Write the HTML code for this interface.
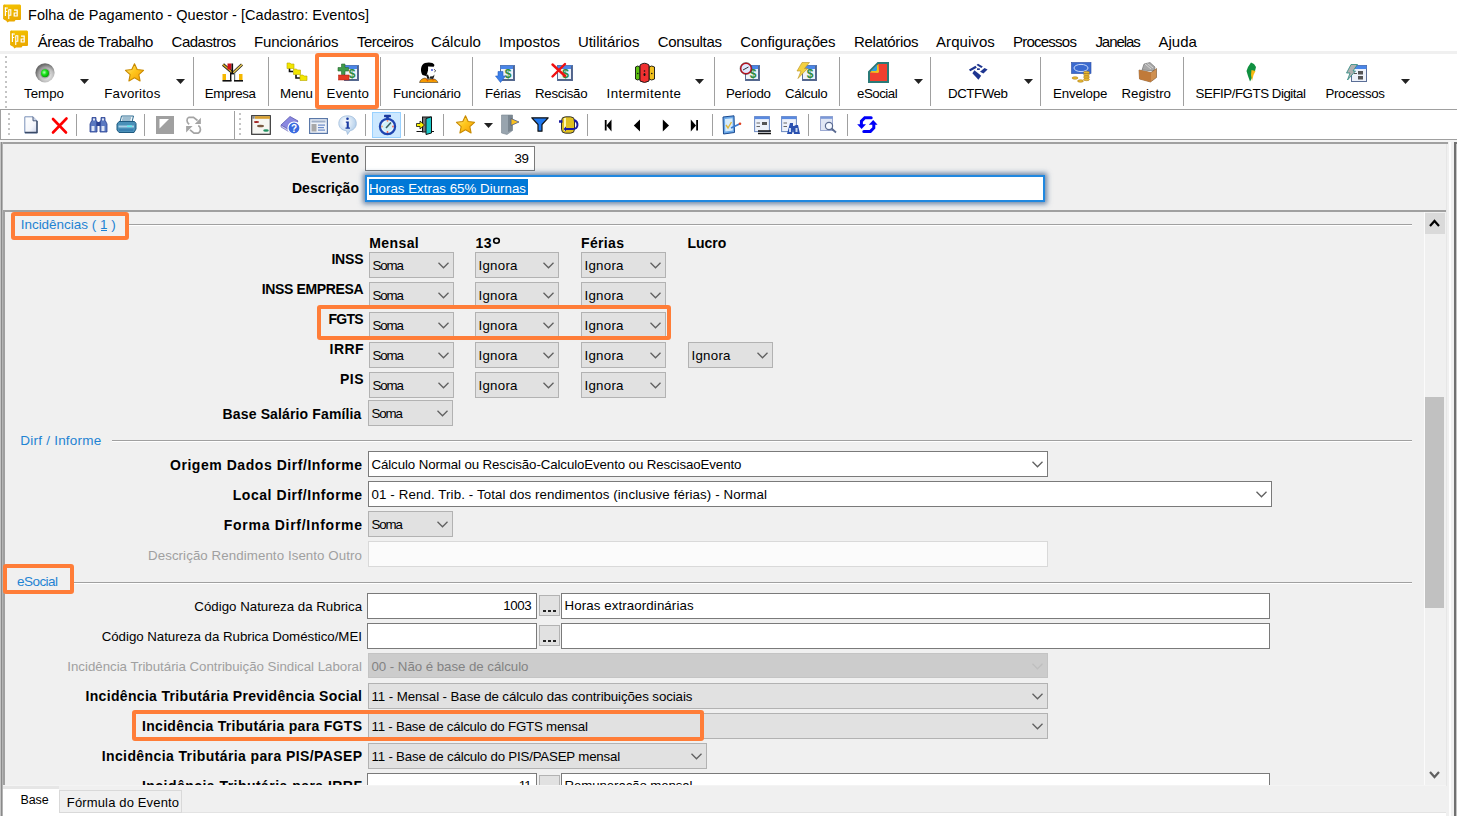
<!DOCTYPE html>
<html><head><meta charset="utf-8"><style>
html,body{margin:0;padding:0;width:1457px;height:816px;overflow:hidden;background:#fff;}
body{position:relative;font-family:"Liberation Sans",sans-serif;color:#000;}
.t{position:absolute;white-space:pre;line-height:1;}
.b{position:absolute;box-sizing:border-box;}
.i{position:absolute;overflow:visible;}
</style></head><body>
<div class="b" style="left:0px;top:0px;width:1457px;height:816px;background:#fff;"></div>
<svg class="i" style="left:3px;top:4px;" width="19" height="19" viewBox="0 0 19 19"><defs><linearGradient id="fpg3" x1="0" y1="0" x2="0.3" y2="1"><stop offset="0" stop-color="#f4c400"/><stop offset="1" stop-color="#eaa800"/></linearGradient></defs><path d="M1 0.5 H17 L18 1.5 V15.5 L17 16 H12.5 L11.5 17.5 H6 L4.5 18.5 L3 16.5 L0.3 15 V1.5 Z" fill="url(#fpg3)"/><path d="M0.3 1.5 L1 0.5 L3 2 V16.5 L0.3 15 Z" fill="#eab000"/><rect x="1.8" y="3.5" width="1.2" height="8.5" fill="#fff"/><rect x="1.8" y="3.5" width="3" height="1.1" fill="#fff"/><rect x="2.6" y="7" width="1.6" height="1" fill="#fff"/><rect x="5.2" y="5.5" width="1.1" height="9.5" fill="#fff"/><path d="M5.8 5.8 H7.8 V11.2 H5.8" fill="none" stroke="#fff" stroke-width="1.1"/><path d="M11 6.2 H14.2 V12 H11.2 V9 H13.6" fill="none" stroke="#fff" stroke-width="1.2"/></svg>
<div class="t" style="left:28.00px;top:8px;font-size:14.5px;letter-spacing:0.034px;">Folha de Pagamento - Questor - [Cadastro: Eventos]</div>
<svg class="i" style="left:10px;top:30px;" width="19" height="19" viewBox="0 0 19 19"><defs><linearGradient id="fpg10" x1="0" y1="0" x2="0.3" y2="1"><stop offset="0" stop-color="#f4c400"/><stop offset="1" stop-color="#eaa800"/></linearGradient></defs><path d="M1 0.5 H17 L18 1.5 V15.5 L17 16 H12.5 L11.5 17.5 H6 L4.5 18.5 L3 16.5 L0.3 15 V1.5 Z" fill="url(#fpg10)"/><path d="M0.3 1.5 L1 0.5 L3 2 V16.5 L0.3 15 Z" fill="#eab000"/><rect x="1.8" y="3.5" width="1.2" height="8.5" fill="#fff"/><rect x="1.8" y="3.5" width="3" height="1.1" fill="#fff"/><rect x="2.6" y="7" width="1.6" height="1" fill="#fff"/><rect x="5.2" y="5.5" width="1.1" height="9.5" fill="#fff"/><path d="M5.8 5.8 H7.8 V11.2 H5.8" fill="none" stroke="#fff" stroke-width="1.1"/><path d="M11 6.2 H14.2 V12 H11.2 V9 H13.6" fill="none" stroke="#fff" stroke-width="1.2"/></svg>
<div class="t" style="left:37.80px;top:34px;font-size:15px;letter-spacing:-0.436px;">Áreas de Trabalho</div>
<div class="t" style="left:171.60px;top:34px;font-size:15px;letter-spacing:-0.496px;">Cadastros</div>
<div class="t" style="left:254.00px;top:34px;font-size:15px;letter-spacing:-0.125px;">Funcionários</div>
<div class="t" style="left:357.00px;top:34px;font-size:15px;letter-spacing:-0.506px;">Terceiros</div>
<div class="t" style="left:431.00px;top:34px;font-size:15px;letter-spacing:-0.038px;">Cálculo</div>
<div class="t" style="left:499.00px;top:34px;font-size:15px;letter-spacing:0.020px;">Impostos</div>
<div class="t" style="left:577.90px;top:34px;font-size:15px;letter-spacing:-0.018px;">Utilitários</div>
<div class="t" style="left:657.70px;top:34px;font-size:15px;letter-spacing:-0.300px;">Consultas</div>
<div class="t" style="left:740.30px;top:34px;font-size:15px;letter-spacing:-0.119px;">Configurações</div>
<div class="t" style="left:854.00px;top:34px;font-size:15px;letter-spacing:-0.348px;">Relatórios</div>
<div class="t" style="left:936.00px;top:34px;font-size:15px;letter-spacing:0.063px;">Arquivos</div>
<div class="t" style="left:1013.00px;top:34px;font-size:15px;letter-spacing:-0.766px;">Processos</div>
<div class="t" style="left:1095.40px;top:34px;font-size:15px;letter-spacing:-1.051px;">Janelas</div>
<div class="t" style="left:1158.60px;top:34px;font-size:15px;letter-spacing:-0.042px;">Ajuda</div>
<div class="b" style="left:0px;top:51px;width:1457px;height:3px;background:#f0f0f0;"></div>
<div class="b" style="left:0px;top:54px;width:1457px;height:55px;background:#fff;"></div>
<div class="b" style="left:0px;top:109px;width:1457px;height:1px;background:#a0a0a0;"></div>
<div class="b" style="left:5px;top:56px;width:2px;height:2px;background:#c4c4c4;"></div>
<div class="b" style="left:5px;top:61px;width:2px;height:2px;background:#c4c4c4;"></div>
<div class="b" style="left:5px;top:66px;width:2px;height:2px;background:#c4c4c4;"></div>
<div class="b" style="left:5px;top:71px;width:2px;height:2px;background:#c4c4c4;"></div>
<div class="b" style="left:5px;top:76px;width:2px;height:2px;background:#c4c4c4;"></div>
<div class="b" style="left:5px;top:81px;width:2px;height:2px;background:#c4c4c4;"></div>
<div class="b" style="left:5px;top:86px;width:2px;height:2px;background:#c4c4c4;"></div>
<div class="b" style="left:5px;top:91px;width:2px;height:2px;background:#c4c4c4;"></div>
<div class="b" style="left:5px;top:96px;width:2px;height:2px;background:#c4c4c4;"></div>
<div class="b" style="left:5px;top:101px;width:2px;height:2px;background:#c4c4c4;"></div>
<div class="b" style="left:5px;top:106px;width:2px;height:2px;background:#c4c4c4;"></div>
<div class="t" style="left:24.00px;top:87px;font-size:13.3px;letter-spacing:0.020px;">Tempo</div>
<div class="t" style="left:104.30px;top:87px;font-size:13.3px;letter-spacing:0.163px;">Favoritos</div>
<div class="t" style="left:204.70px;top:87px;font-size:13.3px;letter-spacing:-0.320px;">Empresa</div>
<div class="t" style="left:280.00px;top:87px;font-size:13.3px;letter-spacing:-0.090px;">Menu</div>
<div class="t" style="left:326.60px;top:87px;font-size:13.3px;letter-spacing:0.198px;">Evento</div>
<div class="t" style="left:393.00px;top:87px;font-size:13.3px;letter-spacing:-0.150px;">Funcionário</div>
<div class="t" style="left:485.00px;top:87px;font-size:13.3px;letter-spacing:-0.191px;">Férias</div>
<div class="t" style="left:535.00px;top:87px;font-size:13.3px;letter-spacing:-0.300px;">Rescisão</div>
<div class="t" style="left:606.60px;top:87px;font-size:13.3px;letter-spacing:0.379px;">Intermitente</div>
<div class="t" style="left:726.00px;top:87px;font-size:13.3px;letter-spacing:-0.264px;">Período</div>
<div class="t" style="left:785.00px;top:87px;font-size:13.3px;letter-spacing:-0.293px;">Cálculo</div>
<div class="t" style="left:857.00px;top:87px;font-size:13.3px;letter-spacing:-0.504px;">eSocial</div>
<div class="t" style="left:948.00px;top:87px;font-size:13.3px;letter-spacing:-0.428px;">DCTFWeb</div>
<div class="t" style="left:1053.00px;top:87px;font-size:13.3px;letter-spacing:-0.137px;">Envelope</div>
<div class="t" style="left:1121.50px;top:87px;font-size:13.3px;">Registro</div>
<div class="t" style="left:1195.60px;top:87px;font-size:13.3px;letter-spacing:-0.462px;">SEFIP/FGTS Digital</div>
<div class="t" style="left:1325.40px;top:87px;font-size:13.3px;letter-spacing:-0.312px;">Processos</div>
<div class="b" style="left:193px;top:57px;width:1px;height:49px;background:#a0a0a0;"></div>
<div class="b" style="left:268px;top:57px;width:1px;height:49px;background:#a0a0a0;"></div>
<div class="b" style="left:380px;top:57px;width:1px;height:49px;background:#a0a0a0;"></div>
<div class="b" style="left:472px;top:57px;width:1px;height:49px;background:#a0a0a0;"></div>
<div class="b" style="left:714px;top:57px;width:1px;height:49px;background:#a0a0a0;"></div>
<div class="b" style="left:839px;top:57px;width:1px;height:49px;background:#a0a0a0;"></div>
<div class="b" style="left:930px;top:57px;width:1px;height:49px;background:#a0a0a0;"></div>
<div class="b" style="left:1040px;top:57px;width:1px;height:49px;background:#a0a0a0;"></div>
<div class="b" style="left:1183px;top:57px;width:1px;height:49px;background:#a0a0a0;"></div>
<svg class="i" style="left:80px;top:79px;" width="9" height="5" viewBox="0 0 9 5"><path d="M0 0 L9 0 L4.5 5 Z" fill="#222"/></svg>
<svg class="i" style="left:176px;top:79px;" width="9" height="5" viewBox="0 0 9 5"><path d="M0 0 L9 0 L4.5 5 Z" fill="#222"/></svg>
<svg class="i" style="left:695px;top:79px;" width="9" height="5" viewBox="0 0 9 5"><path d="M0 0 L9 0 L4.5 5 Z" fill="#222"/></svg>
<svg class="i" style="left:914px;top:79px;" width="9" height="5" viewBox="0 0 9 5"><path d="M0 0 L9 0 L4.5 5 Z" fill="#222"/></svg>
<svg class="i" style="left:1024px;top:79px;" width="9" height="5" viewBox="0 0 9 5"><path d="M0 0 L9 0 L4.5 5 Z" fill="#222"/></svg>
<svg class="i" style="left:1401px;top:79px;" width="9" height="5" viewBox="0 0 9 5"><path d="M0 0 L9 0 L4.5 5 Z" fill="#222"/></svg>
<svg class="i" style="left:35px;top:63px;" width="20" height="20" viewBox="0 0 20 20"><defs><radialGradient id="gr1" cx="0.6" cy="0.65" r="0.6"><stop offset="0" stop-color="#f4f4f4"/><stop offset="0.6" stop-color="#bdbdbd"/><stop offset="1" stop-color="#6d6d6d"/></radialGradient><radialGradient id="gg1" cx="0.4" cy="0.4" r="0.6"><stop offset="0" stop-color="#b9ffb9"/><stop offset="0.5" stop-color="#19e619"/><stop offset="1" stop-color="#0aa00a"/></radialGradient></defs><circle cx="10" cy="9.8" r="9.6" fill="url(#gr1)"/><circle cx="10" cy="10.3" r="5.2" fill="#8a8a8a" opacity="0.6"/><circle cx="10" cy="10.2" r="4" fill="url(#gg1)"/></svg>
<svg class="i" style="left:125px;top:62.5px;" width="19" height="19" viewBox="0 0 19 19"><defs><linearGradient id="st1" x1="0" y1="0" x2="1" y2="1"><stop offset="0" stop-color="#fff2a0"/><stop offset="0.45" stop-color="#ffc81e"/><stop offset="1" stop-color="#f59a00"/></linearGradient></defs><polygon points="9.50,0.76 12.18,6.57 18.54,7.32 13.84,11.67 15.08,17.95 9.50,14.82 3.92,17.95 5.16,11.67 0.46,7.32 6.82,6.57" fill="url(#st1)" stroke="#c98a00" stroke-width="1.1" stroke-linejoin="round"/></svg>
<svg class="i" style="left:222px;top:63px;" width="21" height="19" viewBox="0 0 21 19"><path d="M1 1.5 L11 10" stroke="#1a1a1a" stroke-width="3"/><path d="M1 1.5 L11 10" stroke="#e0b020" stroke-width="1.6"/><path d="M20 1.5 L11 10" stroke="#1a1a1a" stroke-width="3"/><path d="M20 1.5 L11 10" stroke="#e8c850" stroke-width="1.6"/><rect x="5.5" y="0.5" width="4" height="6" fill="#d0101a"/><rect x="9.5" y="0.5" width="1.6" height="10" fill="#111"/><rect x="8" y="10" width="5" height="1.4" fill="#111"/><rect x="8" y="10" width="1.4" height="8" fill="#111"/><rect x="12" y="10" width="1.2" height="8" fill="#6a7a7a"/><rect x="0.5" y="11" width="3.5" height="6.5" fill="#f5b800"/><rect x="17" y="11" width="3.5" height="6.5" fill="#f5b800"/><rect x="0.5" y="17" width="9" height="1.6" fill="#111"/><rect x="12" y="17" width="9" height="1.6" fill="#111"/></svg>
<svg class="i" style="left:286px;top:62px;" width="22" height="20" viewBox="0 0 22 20"><path d="M3.5 6 V9.5 H7" stroke="#111" stroke-width="1.6" fill="none"/><path d="M10 12.5 V16 H14" stroke="#111" stroke-width="1.6" fill="none"/><path d="M1 1 H4 L5 2 H8 V6.5 H1 Z" fill="#f2e600" stroke="#b8a800" stroke-width="0.6"/><path d="M7.5 7 H10.5 L11.5 8 H14.5 V12.5 H7.5 Z" fill="#f2e600" stroke="#b8a800" stroke-width="0.6"/><path d="M14 13 H17 L18 14 H21 V18.5 H14 Z" fill="#f2e600" stroke="#b8a800" stroke-width="0.6"/></svg>
<svg class="i" style="left:344px;top:65px;" width="15" height="16" viewBox="0 0 15 16"><rect x="0.5" y="0.5" width="14" height="15" fill="#eef2fa" stroke="#5a6e96" stroke-width="1"/><rect x="0.5" y="0.5" width="14" height="3.5" fill="#4a86e8"/><rect x="13" y="1" width="1.5" height="14.5" fill="#52648a"/><rect x="1" y="14" width="13.5" height="1.5" fill="#52648a"/><text x="8.0" y="13" text-anchor="middle" font-family="Liberation Sans" font-weight="bold" font-size="12" fill="#2e8b3e">$</text></svg>
<svg class="i" style="left:338px;top:63px;" width="12" height="18" viewBox="0 0 12 18"><path d="M3.5 1 H7 V4.5 H10.5 V8 H7 V11.5 H3.5 V8 H0 V4.5 H3.5 Z" fill="#3f9a4a" stroke="#2a6a30" stroke-width="0.6"/><rect x="0.5" y="12" width="10.5" height="5" fill="#e33a22" stroke="#b02010" stroke-width="0.5"/></svg>
<svg class="i" style="left:419px;top:62px;" width="20" height="21" viewBox="0 0 20 21"><path d="M3.5 13 C1 9.5 1.5 2.5 6 1 C9.5 0 14.5 0.3 15.5 3 L14.5 5 L9.5 6.5 L8.5 11 L7 14 Z" fill="#000"/><path d="M9 4.5 L14.5 4.8 L15.5 7.5 L17 9 L15.2 10 L15.5 12.5 L13.5 14 L10.5 14.5 L8.5 12 L9.2 7 Z" fill="#fff"/><path d="M15.5 12.5 L13.8 14.2 L11 14.5 L10.5 16.5 L14 17 L15 15 Z" fill="#222"/><path d="M7 13 L9 12.5 L10.5 16.5 L8.5 17 Z" fill="#111"/><circle cx="13" cy="8" r="0.9" fill="#3040e0"/><path d="M15 7 L16.8 9 L15.2 10" stroke="#222" stroke-width="0.7" fill="none"/><path d="M0.5 20.5 C1 18 3 16.5 6 16 L9 17.5 L12 17 L15 17 C17 17.5 18.5 19 19 20.5 Z" fill="#f59a00" stroke="#222" stroke-width="0.5"/><path d="M6 16 L9.5 18.5 L8.5 19.5 Z M13 17 L15 17.2 L14 19 Z" fill="#e05000"/></svg>
<svg class="i" style="left:500px;top:65px;" width="15" height="16" viewBox="0 0 15 16"><rect x="0.5" y="0.5" width="14" height="15" fill="#eef2fa" stroke="#5a6e96" stroke-width="1"/><rect x="0.5" y="0.5" width="14" height="3.5" fill="#4a86e8"/><rect x="13" y="1" width="1.5" height="14.5" fill="#52648a"/><rect x="1" y="14" width="13.5" height="1.5" fill="#52648a"/><text x="8.0" y="13" text-anchor="middle" font-family="Liberation Sans" font-weight="bold" font-size="12" fill="#2e8b3e">$</text></svg>
<svg class="i" style="left:495px;top:71px;" width="11" height="12" viewBox="0 0 11 12"><path d="M3 0.5 H8 V5 H10.5 L5.5 11.5 L0.5 5 H3 Z" fill="#3a7ee8" stroke="#2a5fc0" stroke-width="0.6"/></svg>
<svg class="i" style="left:557px;top:65px;" width="16" height="16" viewBox="0 0 16 16"><rect x="0.5" y="0.5" width="15" height="15" fill="#eef2fa" stroke="#5a6e96" stroke-width="1"/><rect x="0.5" y="0.5" width="15" height="3.5" fill="#4a86e8"/><rect x="14" y="1" width="1.5" height="14.5" fill="#52648a"/><rect x="1" y="14" width="14.5" height="1.5" fill="#52648a"/><text x="8.5" y="13" text-anchor="middle" font-family="Liberation Sans" font-weight="bold" font-size="12" fill="#2e8b3e">$</text></svg>
<svg class="i" style="left:551px;top:63px;" width="16" height="15" viewBox="0 0 16 15"><path d="M1.5 1.5 L14 13 M14 1 L1.5 13.5" stroke="#f01010" stroke-width="2.4" stroke-linecap="round"/></svg>
<svg class="i" style="left:634px;top:62px;" width="22" height="21" viewBox="0 0 22 21"><path d="M1.5 5 Q3.5 3 6 5 V17 Q3.5 19 1.5 17 Z" fill="#5cc010" stroke="#111" stroke-width="0.9"/><path d="M15 5 Q17.5 3 20.5 5 V17 Q17.5 19 15 17 Z" fill="#f0c020" stroke="#111" stroke-width="0.9"/><path d="M6 3 Q10.5 -0.5 15 3 V19 Q10.5 22 6 19 Z" fill="#f03030" stroke="#111" stroke-width="0.9"/><circle cx="10.5" cy="9" r="0.8" fill="#111"/><ellipse cx="10.5" cy="12.5" rx="1" ry="1.6" fill="#111"/><circle cx="3.8" cy="11.5" r="0.8" fill="#111"/><circle cx="17.8" cy="11.5" r="0.8" fill="#111"/></svg>
<svg class="i" style="left:745px;top:65px;" width="15" height="16" viewBox="0 0 15 16"><rect x="0.5" y="0.5" width="14" height="15" fill="#eef2fa" stroke="#5a6e96" stroke-width="1"/><rect x="0.5" y="0.5" width="14" height="3.5" fill="#4a86e8"/><rect x="13" y="1" width="1.5" height="14.5" fill="#52648a"/><rect x="1" y="14" width="13.5" height="1.5" fill="#52648a"/><text x="8.0" y="13" text-anchor="middle" font-family="Liberation Sans" font-weight="bold" font-size="12" fill="#2e8b3e">$</text></svg>
<svg class="i" style="left:740px;top:62px;" width="13" height="13" viewBox="0 0 13 13"><circle cx="6" cy="6.5" r="5.3" fill="#dfe8ff" stroke="#c01020" stroke-width="1.5"/><circle cx="6" cy="6.5" r="6" fill="none" stroke="#222" stroke-width="0.4"/><path d="M3 8 L8.5 5" stroke="#333" stroke-width="1"/></svg>
<svg class="i" style="left:802px;top:65px;" width="15" height="16" viewBox="0 0 15 16"><rect x="0.5" y="0.5" width="14" height="15" fill="#eef2fa" stroke="#5a6e96" stroke-width="1"/><rect x="0.5" y="0.5" width="14" height="3.5" fill="#4a86e8"/><rect x="13" y="1" width="1.5" height="14.5" fill="#52648a"/><rect x="1" y="14" width="13.5" height="1.5" fill="#52648a"/><text x="8.0" y="13" text-anchor="middle" font-family="Liberation Sans" font-weight="bold" font-size="12" fill="#2e8b3e">$</text></svg>
<svg class="i" style="left:796px;top:62px;" width="14" height="17" viewBox="0 0 14 17"><path d="M6 0.5 H13.5 L8.5 6.5 H11.5 L2 16.5 L5 9 H1 Z" fill="#f2d040" stroke="#b89020" stroke-width="0.6"/></svg>
<svg class="i" style="left:868px;top:62px;" width="21" height="21" viewBox="0 0 21 21"><path d="M10 1 H20 V20 H1 V10 Z" fill="#f04030" stroke="#2a7a78" stroke-width="2" stroke-linejoin="miter"/><path d="M2 10.5 L10.5 2 L11 10 L10 11 Z" fill="#f0c020"/><path d="M3 9 L9 3 L9 8 L8 9 Z" fill="#30a0e0"/></svg>
<svg class="i" style="left:965px;top:60px;" width="26" height="24" viewBox="0 0 26 24"><path d="M4 9.5 L10.5 5.8 L11.8 7.8 L5.2 11.2 Z" fill="#1e3590"/><path d="M11.5 5 L13 3.8 L17.8 6.6 L16.3 8 Z" fill="#1e3590"/><path d="M12 8.3 H14.8 V10 H12 Z" fill="#1e3590"/><path d="M15 11.8 L19.5 8 L22.6 9.6 L18.4 13.6 Z" fill="#1e3590"/><path d="M7.4 13.3 L9.4 10.2 L16.2 15.8 L13.4 19.8 Z" fill="#1e3590"/></svg>
<svg class="i" style="left:1071px;top:62px;" width="21" height="21" viewBox="0 0 21 21"><rect x="0.5" y="0.5" width="19.5" height="11" fill="#3a6ad0" stroke="#2a4aa0" stroke-width="0.6"/><ellipse cx="10" cy="6" rx="7" ry="3.6" fill="none" stroke="#c8d8f8" stroke-width="1"/><ellipse cx="15.5" cy="10.5" rx="3" ry="1.3" fill="#e8b830" stroke="#a07010" stroke-width="0.5"/><ellipse cx="15.5" cy="12.8" rx="3" ry="1.3" fill="#e8b830" stroke="#a07010" stroke-width="0.5"/><ellipse cx="15.5" cy="15.1" rx="3" ry="1.3" fill="#e8b830" stroke="#a07010" stroke-width="0.5"/><ellipse cx="15.5" cy="17.4" rx="3" ry="1.3" fill="#e8b830" stroke="#a07010" stroke-width="0.5"/><ellipse cx="4" cy="16" rx="3" ry="1.3" fill="#e8b830" stroke="#a07010" stroke-width="0.5"/><ellipse cx="9.5" cy="19" rx="3" ry="1.3" fill="#e8b830" stroke="#a07010" stroke-width="0.5"/></svg>
<svg class="i" style="left:1138px;top:62px;" width="20" height="21" viewBox="0 0 20 21"><path d="M4 8 L6 2 L12 0.5 L17 5 L16 9 Z" fill="#a8a8a8" stroke="#6a6a6a" stroke-width="0.6"/><path d="M7 2 L13 7 M9.5 1.5 L15 6" stroke="#e0e0e0" stroke-width="0.8"/><path d="M1 8 L13 10.5 L18.5 6.5 V15.5 L12.5 20 L1.5 17 Z" fill="#d09050" stroke="#7a5028" stroke-width="0.6"/><path d="M1 8 L13 10.5 V20 L1.5 17 Z" fill="#c07a3a"/></svg>
<svg class="i" style="left:1246px;top:62px;" width="11" height="20" viewBox="0 0 11 20"><path d="M5 0.5 L8 2 L10 5 L9 9 L7 11 L6 16 L4 19.5 L2 14 L0.5 9 L2 5 Z" fill="#109040"/><path d="M5.5 8 L9.5 9 L7.5 13 L6 19 L5 13 Z" fill="#f8b810"/></svg>
<svg class="i" style="left:1346px;top:64px;" width="21" height="18" viewBox="0 0 21 18"><rect x="5.5" y="1.5" width="15" height="16" fill="#eef2fa" stroke="#5a6e96" stroke-width="1"/><rect x="5.5" y="1.5" width="15" height="3.5" fill="#4a86e8"/><rect x="12" y="7" width="5" height="3.5" fill="#555" /><rect x="12" y="12" width="5" height="3.5" fill="#555"/><rect x="8" y="9" width="3" height="1" fill="#555"/><path d="M5 0.5 H11.5 L7 7 H9.5 L1.5 16 L4 9 H0.5 Z" fill="#b0b0b0" stroke="#2a8a80" stroke-width="0.8"/></svg>
<div class="b" style="left:0px;top:110px;width:1457px;height:29px;background:#fff;"></div>
<div class="b" style="left:0px;top:139px;width:1457px;height:1px;background:#a0a0a0;"></div>
<div class="b" style="left:0px;top:109px;width:1px;height:31px;background:#a0a0a0;"></div>
<div class="b" style="left:8px;top:113px;width:2px;height:2px;background:#c4c4c4;"></div>
<div class="b" style="left:8px;top:118px;width:2px;height:2px;background:#c4c4c4;"></div>
<div class="b" style="left:8px;top:123px;width:2px;height:2px;background:#c4c4c4;"></div>
<div class="b" style="left:8px;top:128px;width:2px;height:2px;background:#c4c4c4;"></div>
<div class="b" style="left:8px;top:133px;width:2px;height:2px;background:#c4c4c4;"></div>
<div class="b" style="left:234px;top:111px;width:1px;height:28px;background:#a0a0a0;"></div>
<div class="b" style="left:239px;top:113px;width:2px;height:2px;background:#c4c4c4;"></div>
<div class="b" style="left:239px;top:118px;width:2px;height:2px;background:#c4c4c4;"></div>
<div class="b" style="left:239px;top:123px;width:2px;height:2px;background:#c4c4c4;"></div>
<div class="b" style="left:239px;top:128px;width:2px;height:2px;background:#c4c4c4;"></div>
<div class="b" style="left:239px;top:133px;width:2px;height:2px;background:#c4c4c4;"></div>
<div class="b" style="left:76px;top:114px;width:1px;height:22px;background:#a0a0a0;"></div>
<div class="b" style="left:144px;top:114px;width:1px;height:22px;background:#a0a0a0;"></div>
<div class="b" style="left:365px;top:114px;width:1px;height:22px;background:#a0a0a0;"></div>
<div class="b" style="left:404px;top:114px;width:1px;height:22px;background:#a0a0a0;"></div>
<div class="b" style="left:443px;top:114px;width:1px;height:22px;background:#a0a0a0;"></div>
<div class="b" style="left:587px;top:114px;width:1px;height:22px;background:#a0a0a0;"></div>
<div class="b" style="left:712px;top:114px;width:1px;height:22px;background:#a0a0a0;"></div>
<div class="b" style="left:808px;top:114px;width:1px;height:22px;background:#a0a0a0;"></div>
<div class="b" style="left:847px;top:114px;width:1px;height:22px;background:#a0a0a0;"></div>
<div class="b" style="left:372px;top:112px;width:29px;height:26px;background:#cce8ff;border:1px solid #99d1ff;"></div>
<svg class="i" style="left:24px;top:116px;" width="14" height="18" viewBox="0 0 14 18"><defs><linearGradient id="dg" x1="0" y1="0" x2="1" y2="1"><stop offset="0" stop-color="#fff"/><stop offset="0.6" stop-color="#f4f6fb"/><stop offset="1" stop-color="#c8d0e8"/></linearGradient></defs><path d="M0.8 0.8 H9 L13 4.8 V17 H0.8 Z" fill="url(#dg)" stroke="#7a90b8" stroke-width="1"/><path d="M9 0.8 V4.8 H13" fill="#cdd6ea" stroke="#4a5a7a" stroke-width="1"/><path d="M1 16.5 H13 V5" fill="none" stroke="#3a4a66" stroke-width="1.4"/></svg>
<svg class="i" style="left:51px;top:117px;" width="17" height="17" viewBox="0 0 17 17"><path d="M2 2 L15 15.5 M15.5 1.5 L2 15.5" stroke="#ff0000" stroke-width="2.6" stroke-linecap="round"/></svg>
<svg class="i" style="left:89px;top:116px;" width="19" height="17" viewBox="0 0 19 17"><path d="M3 1.5 H7 V5 H8 V16 H1 V8 L2.5 5 H3 Z" fill="#5a78c0" stroke="#2a4090" stroke-width="0.8"/><path d="M12 1.5 H16 V5 H16.5 L18 8 V16 H11 V5 H12 Z" fill="#5a78c0" stroke="#2a4090" stroke-width="0.8"/><rect x="7.5" y="6" width="4" height="4" fill="#2a4090"/><rect x="2.5" y="10" width="3" height="5" fill="#dfe6f5"/><rect x="12.5" y="10" width="3" height="5" fill="#dfe6f5"/><rect x="4" y="2.5" width="2" height="2" fill="#dfe6f5"/><rect x="13" y="2.5" width="2" height="2" fill="#dfe6f5"/></svg>
<svg class="i" style="left:116px;top:115px;" width="21" height="19" viewBox="0 0 21 19"><path d="M5.5 1 H17.5 L16 7 H4 Z" fill="#eef4f8" stroke="#2a6a90" stroke-width="1"/><path d="M6.5 3 H15 M6 5 H14.5" stroke="#3a7aa0" stroke-width="0.9"/><path d="M1 9 L3 6.5 H18.5 L20 8.5 V14 L18 17.5 H3 L1 15 Z" fill="#4a90b8" stroke="#1f5a80" stroke-width="1"/><rect x="2.5" y="10.5" width="15.5" height="2" fill="#a8d0e8"/><rect x="11" y="10.5" width="5" height="1.5" fill="#60f0f0"/><rect x="3" y="14" width="14" height="2" fill="#3a80b0"/></svg>
<svg class="i" style="left:156px;top:116px;" width="18" height="18" viewBox="0 0 18 18"><rect x="0" y="0" width="18" height="18" fill="#a0a0a0"/><path d="M3.5 3 H13 L3.5 12.5 Z" fill="#fff"/></svg>
<svg class="i" style="left:182px;top:113px;" width="24" height="24" viewBox="0 0 24 24"><path d="M7.2 11.2 C4.3 9.5 4.3 5.3 7 4.3 H11.5 L15.5 7.5" stroke="#a4a4a4" stroke-width="1.7" fill="none"/><path d="M12.8 10.9 H18.9 V4.8 Z" fill="#a4a4a4"/><path d="M16.3 12.6 C19.2 14.3 19.2 19 16 20.2 H12 L8 16.8" stroke="#a4a4a4" stroke-width="1.7" fill="none"/><path d="M4.1 13 H10.6 L4.1 19.6 Z" fill="#a4a4a4"/></svg>
<svg class="i" style="left:251px;top:115px;" width="20" height="20" viewBox="0 0 20 20"><rect x="0.7" y="0.7" width="18.6" height="18.6" fill="#f6f6f2" stroke="#333" stroke-width="1.2"/><rect x="4" y="1.2" width="15" height="2.6" fill="#d8a030"/><rect x="1.2" y="1.2" width="2.5" height="2.5" fill="#888"/><ellipse cx="5.5" cy="7" rx="2.6" ry="1.1" fill="#a02020"/><ellipse cx="9.5" cy="11" rx="3.5" ry="1.3" fill="#7a5a40"/><ellipse cx="15" cy="15.5" rx="2.8" ry="1.2" fill="#209060"/></svg>
<svg class="i" style="left:280px;top:115px;" width="21" height="20" viewBox="0 0 21 20"><path d="M1 10 L10 1.5 L18 6 L11 16 Z" fill="#8a88e0" stroke="#5a58b0" stroke-width="0.8"/><path d="M1 10 L11 16 L11 18 L1 12 Z" fill="#c8c8f0" stroke="#5a58b0" stroke-width="0.6"/><circle cx="14" cy="13" r="6" fill="#3a6ae0" stroke="#fff" stroke-width="1.2"/><text x="14" y="17" text-anchor="middle" font-family="Liberation Sans" font-weight="bold" font-size="10" fill="#fff">?</text></svg>
<svg class="i" style="left:309px;top:118px;" width="19" height="16" viewBox="0 0 19 16"><rect x="0.6" y="0.6" width="17.8" height="14.8" fill="#eef2f8" stroke="#5a78a8" stroke-width="1.2"/><rect x="2.5" y="2.5" width="14" height="2" fill="#a0b0c8"/><rect x="2.5" y="6" width="5" height="7.5" fill="#a8a8a8"/><rect x="9" y="6.5" width="7" height="1.2" fill="#6a8ac8"/><rect x="9" y="9" width="6" height="1.2" fill="#6a8ac8"/><rect x="9" y="11.5" width="7" height="1.2" fill="#6a8ac8"/></svg>
<svg class="i" style="left:338px;top:115px;" width="19" height="20" viewBox="0 0 19 20"><defs><radialGradient id="ib" cx="0.4" cy="0.35" r="0.7"><stop offset="0" stop-color="#ffffff"/><stop offset="1" stop-color="#a8c8e8"/></radialGradient></defs><path d="M9.5 0.8 C15 0.8 18.3 4 18.3 8.5 C18.3 12.5 15.5 15 12 15.8 L9.5 19.5 L8.5 15.8 C4 15.3 0.8 12.5 0.8 8.5 C0.8 4 4 0.8 9.5 0.8 Z" fill="url(#ib)" stroke="#9ab8d8" stroke-width="0.7"/><circle cx="9.5" cy="3.8" r="1.3" fill="#1a3aa0"/><path d="M7.8 6.5 H10.8 V12.5 H12 V13.8 H7.5 V12.5 H8.7 V7.8 H7.8 Z" fill="#1a3aa0"/></svg>
<svg class="i" style="left:378px;top:114px;" width="19" height="21" viewBox="0 0 19 21"><rect x="6" y="0.8" width="7" height="2.5" rx="0.8" fill="#1a3aa0"/><rect x="8.2" y="3" width="2.6" height="2" fill="#1a3aa0"/><circle cx="9.5" cy="12.5" r="7.6" fill="#e8f6ff" stroke="#1e44b0" stroke-width="2.2"/><circle cx="9.5" cy="12.5" r="5" fill="#d0f0f8"/><circle cx="9.5" cy="6.8" r="0.9" fill="#f08060"/><circle cx="15" cy="12.5" r="0.9" fill="#f06050"/><circle cx="9.5" cy="18" r="0.9" fill="#f06050"/><circle cx="4" cy="12.5" r="0.9" fill="#f0a070"/><path d="M8 14 L13 8.5" stroke="#3a6060" stroke-width="1.6"/></svg>
<svg class="i" style="left:416px;top:116px;" width="19" height="19" viewBox="0 0 19 19"><rect x="6.5" y="1" width="8" height="15" fill="#777" stroke="#111" stroke-width="1"/><path d="M10 2.5 L15.5 0.8 V17 L10 18.5 Z" fill="#18c8c8" stroke="#111" stroke-width="1"/><path d="M0.5 7.5 H4 V5 L8.5 9 L4 13 V10.5 H0.5 Z" fill="#f8f000" stroke="#111" stroke-width="0.8"/><path d="M0.5 15.5 H6.5 V13.5" stroke="#111" stroke-width="1" fill="none"/><path d="M15 15.5 H18" stroke="#111" stroke-width="1"/></svg>
<svg class="i" style="left:456px;top:115px;" width="19" height="19" viewBox="0 0 19 19"><defs><linearGradient id="st2" x1="0" y1="0" x2="1" y2="1"><stop offset="0" stop-color="#fff2a0"/><stop offset="0.45" stop-color="#ffc81e"/><stop offset="1" stop-color="#f59a00"/></linearGradient></defs><polygon points="9.50,0.76 12.18,6.57 18.54,7.32 13.84,11.67 15.08,17.95 9.50,14.82 3.92,17.95 5.16,11.67 0.46,7.32 6.82,6.57" fill="url(#st2)" stroke="#c98a00" stroke-width="1.1" stroke-linejoin="round"/></svg>
<svg class="i" style="left:484px;top:123px;" width="9" height="5" viewBox="0 0 9 5"><path d="M0 0 L9 0 L4.5 5 Z" fill="#222"/></svg>
<svg class="i" style="left:500px;top:114px;" width="21" height="21" viewBox="0 0 21 21"><path d="M1.5 1 H12.5 V16.5 L7 20.5 L1.5 19 Z" fill="#98a4ae" stroke="#7a8690" stroke-width="0.6"/><path d="M8 1 H12.5 V16.5 L8 18 Z" fill="#7a8690"/><path d="M11 4.5 L19 8 L11 11.5 Z" fill="#f8c020" stroke="#4a5a8a" stroke-width="0.8"/></svg>
<svg class="i" style="left:531px;top:117px;" width="18" height="15" viewBox="0 0 18 15"><path d="M0.8 0.8 H17.2 L11 7.5 V14.2 H7 V7.5 Z" fill="#1e78f0" stroke="#111" stroke-width="1.2" stroke-linejoin="round"/></svg>
<svg class="i" style="left:559px;top:116px;" width="20" height="18" viewBox="0 0 20 18"><rect x="2.5" y="0.8" width="13" height="16.4" rx="4" fill="#e0c020" stroke="#333" stroke-width="1"/><rect x="5" y="2" width="2" height="13" fill="#fff8b0"/><path d="M0 5.5 H3.5" stroke="#1a1aa0" stroke-width="2.5"/><path d="M15 4 C20 6 19.5 13 14 13 H7" stroke="#1a1aa0" stroke-width="2" fill="none"/><path d="M7 10.5 L4.5 13 L7 15.5 Z" fill="#1a1aa0"/></svg>
<svg class="i" style="left:604px;top:119px;" width="8" height="13" viewBox="0 0 8 13"><rect x="0.8" y="1" width="1.8" height="10.5" fill="#000"/><path d="M7.5 0.5 V12.5 L2.5 6.5 Z" fill="#000"/></svg>
<svg class="i" style="left:633px;top:119px;" width="8" height="13" viewBox="0 0 8 13"><path d="M7 0.5 V12.5 L0.8 6.5 Z" fill="#000"/></svg>
<svg class="i" style="left:662px;top:119px;" width="8" height="13" viewBox="0 0 8 13"><path d="M0.8 0.5 V12.5 L7 6.5 Z" fill="#000"/></svg>
<svg class="i" style="left:690px;top:119px;" width="9" height="13" viewBox="0 0 9 13"><rect x="6.2" y="1" width="1.8" height="10.5" fill="#000"/><path d="M0.8 0.5 V12.5 L6 6.5 Z" fill="#000"/></svg>
<svg class="i" style="left:722px;top:115px;" width="20" height="20" viewBox="0 0 20 20"><path d="M1 2 L12 0.8 L12.5 17.5 L1.5 19 Z" fill="#6aa8e8" stroke="#1a4a90" stroke-width="1"/><path d="M3 4 L10.5 3.2 L10.8 15.5 L3.3 16.5 Z" fill="#d8ecfb"/><path d="M4 10 L6 13 L9.5 7" stroke="#e0b840" stroke-width="1.4" fill="none"/><path d="M9 13 L17.5 9" stroke="#3a7ad0" stroke-width="1.5"/><circle cx="18" cy="8.8" r="1.3" fill="#e04020"/></svg>
<svg class="i" style="left:754px;top:116px;" width="18" height="19" viewBox="0 0 18 19"><rect x="0.6" y="0.6" width="14.8" height="15" fill="#eef2fa" stroke="#6a88c0" stroke-width="1"/><rect x="0.6" y="0.6" width="14.8" height="2.5" fill="#5a8ae0"/><rect x="8" y="6" width="5" height="3" fill="#555"/><rect x="2.5" y="6.5" width="3.5" height="1" fill="#666"/><rect x="2.5" y="10" width="3.5" height="1" fill="#666"/><path d="M4 15 H17 M4 17.5 H17" stroke="#111" stroke-width="1.6"/></svg>
<svg class="i" style="left:781px;top:116px;" width="20" height="19" viewBox="0 0 20 19"><rect x="0.6" y="0.6" width="14.8" height="15" fill="#eef2fa" stroke="#6a88c0" stroke-width="1"/><rect x="0.6" y="0.6" width="14.8" height="2.5" fill="#5a8ae0"/><rect x="2.5" y="6.5" width="3.5" height="1" fill="#666"/><rect x="2.5" y="10" width="3.5" height="1" fill="#666"/><path d="M9 7 H12 V10 H13 L15 9 H17 L19 18 H13 L12 14 L11 18 H6 Z" fill="#2a50b0"/><rect x="8" y="12" width="2" height="4" fill="#c8d8f0"/><rect x="14.5" y="12" width="2" height="4" fill="#c8d8f0"/></svg>
<svg class="i" style="left:820px;top:116px;" width="17" height="17" viewBox="0 0 17 17"><rect x="0.6" y="0.6" width="12" height="14" fill="#e0e6f4" stroke="#8898c8" stroke-width="0.8"/><rect x="0.6" y="0.6" width="12" height="2.2" fill="#7a98d8"/><circle cx="9" cy="10" r="3.6" fill="#f4f8ff" stroke="#5a6a90" stroke-width="1.2"/><path d="M11.5 12.5 L16 16.5" stroke="#5a6a90" stroke-width="1.8"/></svg>
<svg class="i" style="left:854px;top:113px;" width="26" height="23" viewBox="0 0 26 23"><path d="M17.2 4.8 H10.8 L7.4 8.2 V12" stroke="#0000f8" stroke-width="3" fill="none" stroke-linecap="round"/><path d="M3.2 11.3 H12 L7.6 16 Z" fill="#0000f8"/><path d="M9.8 18.4 H16.4 L19.8 15 V11" stroke="#0000f8" stroke-width="3" fill="none" stroke-linecap="round"/><path d="M14.8 11.7 H23.6 L19.2 7 Z" fill="#0000f8"/></svg>
<div class="b" style="left:0px;top:140px;width:1457px;height:676px;background:#f0f0f0;"></div>
<div class="b" style="left:0px;top:140px;width:1457px;height:2px;background:#f4f4f4;"></div>
<div class="b" style="left:0px;top:142px;width:1448px;height:2px;background:#a0a0a0;"></div>
<div class="b" style="left:0px;top:142px;width:1px;height:674px;background:#c4c4c4;"></div>
<div class="b" style="left:1px;top:142px;width:1px;height:674px;background:#8a8a8a;"></div>
<div class="b" style="left:2px;top:142px;width:1px;height:674px;background:#b4b4b4;"></div>
<div class="b" style="left:1446px;top:144px;width:1px;height:642px;background:#e6e6e6;"></div>
<div class="b" style="left:1448px;top:142px;width:6px;height:674px;background:#f0f0f0;"></div>
<div class="b" style="left:1449px;top:142px;width:2px;height:674px;background:#fdfdfd;"></div>
<div class="b" style="left:1454px;top:142px;width:3px;height:2px;background:#7a7a7a;"></div>
<div class="b" style="left:1454px;top:142px;width:2px;height:674px;background:#707070;"></div>
<div class="b" style="left:1456px;top:144px;width:1px;height:672px;background:#c4c4c4;"></div>
<div class="t" style="left:311.00px;top:151px;font-size:14px;font-weight:bold;letter-spacing:0.264px;">Evento</div>
<div class="b" style="left:365px;top:146px;width:170px;height:25px;background:#fff;border:1px solid #7a7a7a;"></div>
<div class="t" style="left:514.50px;top:152px;font-size:13.3px;letter-spacing:-0.294px;">39</div>
<div class="t" style="left:292.00px;top:181px;font-size:14px;font-weight:bold;">Descrição</div>
<div class="b" style="left:365px;top:175px;width:680px;height:27px;background:#fff;border:2px solid #2088e0;box-shadow:0 0 5px 2px rgba(60,95,140,0.75);"></div>
<div class="b" style="left:369px;top:179px;width:159px;height:16px;background:#0078d7;"></div>
<div class="t" style="left:369.00px;top:182px;font-size:13.3px;color:#fff;letter-spacing:0.013px;">Horas Extras 65% Diurnas</div>
<div class="b" style="left:3px;top:210px;width:1443px;height:2px;background:#a0a0a0;"></div>
<div class="b" style="left:3px;top:210px;width:2px;height:575px;background:#a0a0a0;"></div>
<div class="b" style="left:1424px;top:212px;width:1px;height:574px;background:#fbfbfb;"></div>
<div class="b" style="left:1425px;top:213px;width:20px;height:21px;background:#dadada;"></div>
<svg class="i" style="left:1429px;top:219px;" width="11" height="8" viewBox="0 0 11 8"><path d="M1 7 L5.5 2 L10 7" stroke="#000" stroke-width="2.2" fill="none"/></svg>
<div class="b" style="left:1425px;top:397px;width:19px;height:211px;background:#c1c1c1;"></div>
<svg class="i" style="left:1429px;top:771px;" width="11" height="8" viewBox="0 0 11 8"><path d="M1 1 L5.5 6 L10 1" stroke="#606060" stroke-width="2.2" fill="none"/></svg>
<div class="b" style="left:3px;top:785px;width:1443px;height:1px;background:#e8e8e8;"></div>
<div class="t" style="left:20.70px;top:218px;font-size:13.5px;color:#1f83d3;letter-spacing:-0.018px;">Incidências ( 1 )</div>
<div class="b" style="left:101px;top:230px;width:6px;height:1px;background:#1f83d3;"></div>
<div class="b" style="left:125px;top:224px;width:1287px;height:1px;background:#a0a0a0;"></div>
<div class="b" style="left:125px;top:225px;width:1287px;height:1px;background:#ffffff;"></div>
<svg class="i" style="left:492px;top:236px;" width="10" height="10" viewBox="0 0 10 10"><ellipse cx="4.5" cy="4.8" rx="2.8" ry="2.5" fill="none" stroke="#000" stroke-width="1.6"/></svg>
<div class="t" style="left:369.30px;top:236px;font-size:14px;font-weight:bold;letter-spacing:0.387px;">Mensal</div>
<div class="t" style="left:475.50px;top:236px;font-size:14px;font-weight:bold;letter-spacing:0.427px;">13</div>
<div class="t" style="left:581.00px;top:236px;font-size:14px;font-weight:bold;letter-spacing:0.350px;">Férias</div>
<div class="t" style="left:687.60px;top:236px;font-size:14px;font-weight:bold;letter-spacing:-0.048px;">Lucro</div>
<div class="t" style="left:331.40px;top:252px;font-size:14px;font-weight:bold;letter-spacing:-0.159px;">INSS</div>
<div class="b" style="left:369px;top:252px;width:85px;height:26px;background:#e1e1e1;border:1px solid #b2b2b2;"></div>
<svg class="i" style="left:437.5px;top:261.6px;" width="11" height="7" viewBox="0 0 11 7"><path d="M0.5 0.8 L5.5 5.8 L10.5 0.8" stroke="#606060" stroke-width="1.3" fill="none"/></svg>
<div class="t" style="left:372.50px;top:259px;font-size:13.3px;letter-spacing:-1.148px;">Soma</div>
<div class="b" style="left:475px;top:252px;width:84px;height:26px;background:#e1e1e1;border:1px solid #b2b2b2;"></div>
<svg class="i" style="left:542.5px;top:261.6px;" width="11" height="7" viewBox="0 0 11 7"><path d="M0.5 0.8 L5.5 5.8 L10.5 0.8" stroke="#606060" stroke-width="1.3" fill="none"/></svg>
<div class="t" style="left:478.50px;top:259px;font-size:13.3px;letter-spacing:0.257px;">Ignora</div>
<div class="b" style="left:581px;top:252px;width:85px;height:26px;background:#e1e1e1;border:1px solid #b2b2b2;"></div>
<svg class="i" style="left:649.5px;top:261.6px;" width="11" height="7" viewBox="0 0 11 7"><path d="M0.5 0.8 L5.5 5.8 L10.5 0.8" stroke="#606060" stroke-width="1.3" fill="none"/></svg>
<div class="t" style="left:584.50px;top:259px;font-size:13.3px;letter-spacing:0.257px;">Ignora</div>
<div class="t" style="left:261.80px;top:282px;font-size:14px;font-weight:bold;letter-spacing:-0.364px;">INSS EMPRESA</div>
<div class="b" style="left:369px;top:282px;width:85px;height:26px;background:#e1e1e1;border:1px solid #b2b2b2;"></div>
<svg class="i" style="left:437.5px;top:291.6px;" width="11" height="7" viewBox="0 0 11 7"><path d="M0.5 0.8 L5.5 5.8 L10.5 0.8" stroke="#606060" stroke-width="1.3" fill="none"/></svg>
<div class="t" style="left:372.50px;top:289px;font-size:13.3px;letter-spacing:-1.148px;">Soma</div>
<div class="b" style="left:475px;top:282px;width:84px;height:26px;background:#e1e1e1;border:1px solid #b2b2b2;"></div>
<svg class="i" style="left:542.5px;top:291.6px;" width="11" height="7" viewBox="0 0 11 7"><path d="M0.5 0.8 L5.5 5.8 L10.5 0.8" stroke="#606060" stroke-width="1.3" fill="none"/></svg>
<div class="t" style="left:478.50px;top:289px;font-size:13.3px;letter-spacing:0.257px;">Ignora</div>
<div class="b" style="left:581px;top:282px;width:85px;height:26px;background:#e1e1e1;border:1px solid #b2b2b2;"></div>
<svg class="i" style="left:649.5px;top:291.6px;" width="11" height="7" viewBox="0 0 11 7"><path d="M0.5 0.8 L5.5 5.8 L10.5 0.8" stroke="#606060" stroke-width="1.3" fill="none"/></svg>
<div class="t" style="left:584.50px;top:289px;font-size:13.3px;letter-spacing:0.257px;">Ignora</div>
<div class="t" style="left:328.60px;top:312px;font-size:14px;font-weight:bold;letter-spacing:-0.777px;">FGTS</div>
<div class="b" style="left:369px;top:312px;width:85px;height:26px;background:#e1e1e1;border:1px solid #b2b2b2;"></div>
<svg class="i" style="left:437.5px;top:321.6px;" width="11" height="7" viewBox="0 0 11 7"><path d="M0.5 0.8 L5.5 5.8 L10.5 0.8" stroke="#606060" stroke-width="1.3" fill="none"/></svg>
<div class="t" style="left:372.50px;top:319px;font-size:13.3px;letter-spacing:-1.148px;">Soma</div>
<div class="b" style="left:475px;top:312px;width:84px;height:26px;background:#e1e1e1;border:1px solid #b2b2b2;"></div>
<svg class="i" style="left:542.5px;top:321.6px;" width="11" height="7" viewBox="0 0 11 7"><path d="M0.5 0.8 L5.5 5.8 L10.5 0.8" stroke="#606060" stroke-width="1.3" fill="none"/></svg>
<div class="t" style="left:478.50px;top:319px;font-size:13.3px;letter-spacing:0.257px;">Ignora</div>
<div class="b" style="left:581px;top:312px;width:85px;height:26px;background:#e1e1e1;border:1px solid #b2b2b2;"></div>
<svg class="i" style="left:649.5px;top:321.6px;" width="11" height="7" viewBox="0 0 11 7"><path d="M0.5 0.8 L5.5 5.8 L10.5 0.8" stroke="#606060" stroke-width="1.3" fill="none"/></svg>
<div class="t" style="left:584.50px;top:319px;font-size:13.3px;letter-spacing:0.257px;">Ignora</div>
<div class="t" style="left:329.60px;top:342px;font-size:14px;font-weight:bold;letter-spacing:0.446px;">IRRF</div>
<div class="b" style="left:369px;top:342px;width:85px;height:26px;background:#e1e1e1;border:1px solid #b2b2b2;"></div>
<svg class="i" style="left:437.5px;top:351.6px;" width="11" height="7" viewBox="0 0 11 7"><path d="M0.5 0.8 L5.5 5.8 L10.5 0.8" stroke="#606060" stroke-width="1.3" fill="none"/></svg>
<div class="t" style="left:372.50px;top:349px;font-size:13.3px;letter-spacing:-1.148px;">Soma</div>
<div class="b" style="left:475px;top:342px;width:84px;height:26px;background:#e1e1e1;border:1px solid #b2b2b2;"></div>
<svg class="i" style="left:542.5px;top:351.6px;" width="11" height="7" viewBox="0 0 11 7"><path d="M0.5 0.8 L5.5 5.8 L10.5 0.8" stroke="#606060" stroke-width="1.3" fill="none"/></svg>
<div class="t" style="left:478.50px;top:349px;font-size:13.3px;letter-spacing:0.257px;">Ignora</div>
<div class="b" style="left:581px;top:342px;width:85px;height:26px;background:#e1e1e1;border:1px solid #b2b2b2;"></div>
<svg class="i" style="left:649.5px;top:351.6px;" width="11" height="7" viewBox="0 0 11 7"><path d="M0.5 0.8 L5.5 5.8 L10.5 0.8" stroke="#606060" stroke-width="1.3" fill="none"/></svg>
<div class="t" style="left:584.50px;top:349px;font-size:13.3px;letter-spacing:0.257px;">Ignora</div>
<div class="b" style="left:688px;top:342px;width:85px;height:26px;background:#e1e1e1;border:1px solid #b2b2b2;"></div>
<svg class="i" style="left:756.5px;top:351.6px;" width="11" height="7" viewBox="0 0 11 7"><path d="M0.5 0.8 L5.5 5.8 L10.5 0.8" stroke="#606060" stroke-width="1.3" fill="none"/></svg>
<div class="t" style="left:691.50px;top:349px;font-size:13.3px;letter-spacing:0.257px;">Ignora</div>
<div class="t" style="left:340.00px;top:372px;font-size:14px;font-weight:bold;letter-spacing:0.517px;">PIS</div>
<div class="b" style="left:369px;top:372px;width:85px;height:26px;background:#e1e1e1;border:1px solid #b2b2b2;"></div>
<svg class="i" style="left:437.5px;top:381.6px;" width="11" height="7" viewBox="0 0 11 7"><path d="M0.5 0.8 L5.5 5.8 L10.5 0.8" stroke="#606060" stroke-width="1.3" fill="none"/></svg>
<div class="t" style="left:372.50px;top:379px;font-size:13.3px;letter-spacing:-1.148px;">Soma</div>
<div class="b" style="left:475px;top:372px;width:84px;height:26px;background:#e1e1e1;border:1px solid #b2b2b2;"></div>
<svg class="i" style="left:542.5px;top:381.6px;" width="11" height="7" viewBox="0 0 11 7"><path d="M0.5 0.8 L5.5 5.8 L10.5 0.8" stroke="#606060" stroke-width="1.3" fill="none"/></svg>
<div class="t" style="left:478.50px;top:379px;font-size:13.3px;letter-spacing:0.257px;">Ignora</div>
<div class="b" style="left:581px;top:372px;width:85px;height:26px;background:#e1e1e1;border:1px solid #b2b2b2;"></div>
<svg class="i" style="left:649.5px;top:381.6px;" width="11" height="7" viewBox="0 0 11 7"><path d="M0.5 0.8 L5.5 5.8 L10.5 0.8" stroke="#606060" stroke-width="1.3" fill="none"/></svg>
<div class="t" style="left:584.50px;top:379px;font-size:13.3px;letter-spacing:0.257px;">Ignora</div>
<div class="t" style="left:222.60px;top:407px;font-size:14px;font-weight:bold;letter-spacing:0.138px;">Base Salário Família</div>
<div class="b" style="left:368px;top:400px;width:85px;height:26px;background:#e1e1e1;border:1px solid #b2b2b2;"></div>
<svg class="i" style="left:436.5px;top:409.6px;" width="11" height="7" viewBox="0 0 11 7"><path d="M0.5 0.8 L5.5 5.8 L10.5 0.8" stroke="#606060" stroke-width="1.3" fill="none"/></svg>
<div class="t" style="left:371.50px;top:407px;font-size:13.3px;letter-spacing:-1.148px;">Soma</div>
<div class="t" style="left:20.30px;top:434px;font-size:13.5px;color:#1f83d3;letter-spacing:0.230px;">Dirf / Informe</div>
<div class="b" style="left:112px;top:440px;width:1300px;height:1px;background:#a0a0a0;"></div>
<div class="b" style="left:112px;top:441px;width:1300px;height:1px;background:#ffffff;"></div>
<div class="t" style="left:170.00px;top:458px;font-size:14px;font-weight:bold;letter-spacing:0.545px;">Origem Dados Dirf/Informe</div>
<div class="b" style="left:368px;top:451px;width:680px;height:26px;background:#fff;border:1px solid #7a7a7a;"></div>
<svg class="i" style="left:1031.5px;top:460.6px;" width="11" height="7" viewBox="0 0 11 7"><path d="M0.5 0.8 L5.5 5.8 L10.5 0.8" stroke="#606060" stroke-width="1.3" fill="none"/></svg>
<div class="t" style="left:371.50px;top:458px;font-size:13.3px;letter-spacing:-0.110px;">Cálculo Normal ou Rescisão-CalculoEvento ou RescisaoEvento</div>
<div class="t" style="left:232.70px;top:488px;font-size:14px;font-weight:bold;letter-spacing:0.559px;">Local Dirf/Informe</div>
<div class="b" style="left:368px;top:481px;width:904px;height:26px;background:#fff;border:1px solid #7a7a7a;"></div>
<svg class="i" style="left:1255.5px;top:490.6px;" width="11" height="7" viewBox="0 0 11 7"><path d="M0.5 0.8 L5.5 5.8 L10.5 0.8" stroke="#606060" stroke-width="1.3" fill="none"/></svg>
<div class="t" style="left:371.50px;top:488px;font-size:13.3px;letter-spacing:0.116px;">01 - Rend. Trib. - Total dos rendimentos (inclusive férias) - Normal</div>
<div class="t" style="left:223.80px;top:518px;font-size:14px;font-weight:bold;letter-spacing:0.717px;">Forma Dirf/Informe</div>
<div class="b" style="left:368px;top:511px;width:85px;height:26px;background:#e1e1e1;border:1px solid #b2b2b2;"></div>
<svg class="i" style="left:436.5px;top:520.6px;" width="11" height="7" viewBox="0 0 11 7"><path d="M0.5 0.8 L5.5 5.8 L10.5 0.8" stroke="#606060" stroke-width="1.3" fill="none"/></svg>
<div class="t" style="left:371.50px;top:518px;font-size:13.3px;letter-spacing:-1.148px;">Soma</div>
<div class="t" style="left:148.00px;top:549px;font-size:13.3px;color:#a0a0a0;letter-spacing:0.080px;">Descrição Rendimento Isento Outro</div>
<div class="b" style="left:368px;top:541px;width:680px;height:26px;background:#fbfbfb;border:1px solid #d9d9d9;"></div>
<div class="t" style="left:17.00px;top:575px;font-size:13.5px;color:#1f83d3;letter-spacing:-0.546px;">eSocial</div>
<div class="b" style="left:73px;top:582px;width:1339px;height:1px;background:#a0a0a0;"></div>
<div class="b" style="left:73px;top:583px;width:1339px;height:1px;background:#ffffff;"></div>
<div class="t" style="left:194.30px;top:600px;font-size:13.3px;">Código Natureza da Rubrica</div>
<div class="b" style="left:367px;top:593px;width:170px;height:26px;background:#fff;border:1px solid #7a7a7a;"></div>
<div class="t" style="left:503.30px;top:599px;font-size:13.3px;letter-spacing:-0.396px;">1003</div>
<div class="b" style="left:539px;top:595px;width:21px;height:21px;background:#e1e1e1;border:1px solid #b2b2b2;"></div>
<div class="b" style="left:543px;top:610px;width:2.5px;height:1.6px;background:#222;"></div>
<div class="b" style="left:548px;top:610px;width:2.5px;height:1.6px;background:#222;"></div>
<div class="b" style="left:553px;top:610px;width:2.5px;height:1.6px;background:#222;"></div>
<div class="b" style="left:561px;top:593px;width:709px;height:26px;background:#fff;border:1px solid #7a7a7a;"></div>
<div class="t" style="left:564.60px;top:599px;font-size:13.3px;letter-spacing:0.093px;">Horas extraordinárias</div>
<div class="t" style="left:101.70px;top:630px;font-size:13.3px;letter-spacing:-0.036px;">Código Natureza da Rubrica Doméstico/MEI</div>
<div class="b" style="left:367px;top:623px;width:170px;height:26px;background:#fff;border:1px solid #7a7a7a;"></div>
<div class="b" style="left:539px;top:625px;width:21px;height:21px;background:#e1e1e1;border:1px solid #b2b2b2;"></div>
<div class="b" style="left:543px;top:640px;width:2.5px;height:1.6px;background:#222;"></div>
<div class="b" style="left:548px;top:640px;width:2.5px;height:1.6px;background:#222;"></div>
<div class="b" style="left:553px;top:640px;width:2.5px;height:1.6px;background:#222;"></div>
<div class="b" style="left:561px;top:623px;width:709px;height:26px;background:#fff;border:1px solid #7a7a7a;"></div>
<div class="t" style="left:67.30px;top:660px;font-size:13.3px;color:#a0a0a0;letter-spacing:-0.021px;">Incidência Tributária Contribuição Sindical Laboral</div>
<div class="b" style="left:368px;top:653px;width:680px;height:25px;background:#cccccc;border:1px solid #c4c4c4;"></div>
<svg class="i" style="left:1031.5px;top:662.6px;" width="11" height="7" viewBox="0 0 11 7"><path d="M0.5 0.8 L5.5 5.8 L10.5 0.8" stroke="#bfbfbf" stroke-width="1.3" fill="none"/></svg>
<div class="t" style="left:371.50px;top:660px;font-size:13.3px;color:#838383;letter-spacing:-0.049px;">00 - Não é base de cálculo</div>
<div class="t" style="left:85.50px;top:689px;font-size:14px;font-weight:bold;letter-spacing:0.326px;">Incidência Tributária Previdência Social</div>
<div class="b" style="left:368px;top:683px;width:680px;height:26px;background:#e1e1e1;border:1px solid #b2b2b2;"></div>
<svg class="i" style="left:1031.5px;top:692.6px;" width="11" height="7" viewBox="0 0 11 7"><path d="M0.5 0.8 L5.5 5.8 L10.5 0.8" stroke="#606060" stroke-width="1.3" fill="none"/></svg>
<div class="t" style="left:371.50px;top:690px;font-size:13.3px;letter-spacing:-0.088px;">11 - Mensal - Base de cálculo das contribuições sociais</div>
<div class="t" style="left:142.00px;top:719px;font-size:14px;font-weight:bold;letter-spacing:0.305px;">Incidência Tributária para FGTS</div>
<div class="b" style="left:368px;top:713px;width:680px;height:26px;background:#e1e1e1;border:1px solid #b2b2b2;"></div>
<svg class="i" style="left:1031.5px;top:722.6px;" width="11" height="7" viewBox="0 0 11 7"><path d="M0.5 0.8 L5.5 5.8 L10.5 0.8" stroke="#606060" stroke-width="1.3" fill="none"/></svg>
<div class="t" style="left:371.50px;top:720px;font-size:13.3px;letter-spacing:-0.216px;">11 - Base de cálculo do FGTS mensal</div>
<div class="t" style="left:101.70px;top:749px;font-size:14px;font-weight:bold;letter-spacing:0.398px;">Incidência Tributária para PIS/PASEP</div>
<div class="b" style="left:368px;top:743px;width:339px;height:26px;background:#e1e1e1;border:1px solid #b2b2b2;"></div>
<svg class="i" style="left:690.5px;top:752.6px;" width="11" height="7" viewBox="0 0 11 7"><path d="M0.5 0.8 L5.5 5.8 L10.5 0.8" stroke="#606060" stroke-width="1.3" fill="none"/></svg>
<div class="t" style="left:371.50px;top:750px;font-size:13.3px;letter-spacing:-0.201px;">11 - Base de cálculo do PIS/PASEP mensal</div>
<div class="b" style="left:0px;top:0px;width:1424px;height:785px;overflow:hidden;">
<div class="t" style="left:142.00px;top:779px;font-size:14px;font-weight:bold;letter-spacing:0.461px;">Incidência Tributária para IRRF</div>
<div class="b" style="left:367px;top:773px;width:170px;height:26px;background:#fff;border:1px solid #7a7a7a;"></div>
<div class="t" style="left:518.70px;top:779px;font-size:13.3px;letter-spacing:-0.807px;">11</div>
<div class="b" style="left:539px;top:775px;width:21px;height:21px;background:#e1e1e1;border:1px solid #b2b2b2;"></div>
<div class="b" style="left:543px;top:790px;width:2.5px;height:1.6px;background:#222;"></div>
<div class="b" style="left:548px;top:790px;width:2.5px;height:1.6px;background:#222;"></div>
<div class="b" style="left:553px;top:790px;width:2.5px;height:1.6px;background:#222;"></div>
<div class="b" style="left:561px;top:773px;width:709px;height:26px;background:#fff;border:1px solid #7a7a7a;"></div>
<div class="t" style="left:564.60px;top:779px;font-size:13.3px;letter-spacing:-0.124px;">Remuneração mensal</div>
</div>
<div class="b" style="left:3px;top:785px;width:1443px;height:1px;background:#f4f4f4;"></div>
<div class="b" style="left:3px;top:786px;width:1443px;height:26px;background:#f0f0f0;"></div>
<div class="b" style="left:3px;top:812px;width:1443px;height:1px;background:#e3e3e3;"></div>
<div class="b" style="left:3px;top:813px;width:1443px;height:3px;background:#fff;"></div>
<div class="b" style="left:59px;top:790px;width:123px;height:23px;background:#f0f0f0;border:1px solid #d9d9d9;"></div>
<div class="b" style="left:3px;top:786px;width:56px;height:3px;background:#e6e6e6;"></div>
<div class="b" style="left:3px;top:789px;width:56px;height:27px;background:#fff;"></div>
<div class="t" style="left:20.60px;top:794px;font-size:12.5px;letter-spacing:-0.131px;">Base</div>
<div class="t" style="left:66.80px;top:796px;font-size:13px;letter-spacing:0.148px;">Fórmula do Evento</div>
<div class="b" style="left:315px;top:53px;width:64px;height:56px;border:4px solid #ff7d38;border-radius:3px;"></div>
<div class="b" style="left:11px;top:212px;width:118px;height:28px;border:4px solid #ff7d38;border-radius:3px;"></div>
<div class="b" style="left:317px;top:305px;width:354px;height:35px;border:4px solid #ff7d38;border-radius:3px;"></div>
<div class="b" style="left:3px;top:564px;width:71px;height:30px;border:4px solid #ff7d38;border-radius:3px;"></div>
<div class="b" style="left:132px;top:710px;width:572px;height:31px;border:4px solid #ff7d38;border-radius:3px;"></div>
</body></html>
